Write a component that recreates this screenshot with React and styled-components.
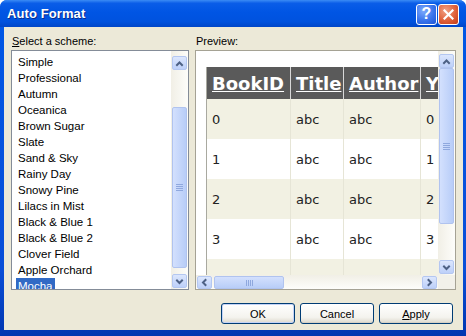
import React from "react";
import styled, { createGlobalStyle } from "styled-components";

const schemes = [
  "Simple",
  "Professional",
  "Autumn",
  "Oceanica",
  "Brown Sugar",
  "Slate",
  "Sand & Sky",
  "Rainy Day",
  "Snowy Pine",
  "Lilacs in Mist",
  "Black & Blue 1",
  "Black & Blue 2",
  "Clover Field",
  "Apple Orchard",
  "Mocha",
];

const columns = [
  { name: "BookID", width: 84 },
  { name: "Title", width: 53 },
  { name: "Author", width: 77 },
  { name: "Year", width: 60 },
];

const GlobalStyle = createGlobalStyle`
  html, body {
    margin: 0;
    padding: 0;
    background: #ffffff;
  }
  body {
    font-family: "Liberation Sans", Arial, sans-serif;
  }
`;

const Window = styled.div`
  width: 466px;
  height: 336px;
  display: flex;
  flex-direction: column;
  background: linear-gradient(to bottom, #0058e6, #0a4fd8 80%, #0036b0);
  border-radius: 7px 7px 0 0;
  overflow: hidden;
`;

const TitleBar = styled.div`
  height: 27px;
  flex: none;
  display: flex;
  align-items: center;
  justify-content: space-between;
  padding: 0 7px 0 7px;
  background: linear-gradient(
    to bottom,
    #3b8cf5 0%,
    #0a5de8 12%,
    #0055e4 45%,
    #0052de 80%,
    #0046c8 100%
  );
`;

const Title = styled.div`
  color: #ffffff;
  font: bold 13px "Liberation Sans", Arial, sans-serif;
  text-shadow: 1px 1px 0 #0b2d8c;
  letter-spacing: 0.1px;
`;

const Caption = styled.div`
  display: flex;
  gap: 1px;
  margin-top: 1px;
`;

const CapButton = styled.div`
  width: 21px;
  height: 21px;
  box-sizing: border-box;
  border: 1px solid #ffffff;
  border-radius: 3px;
  display: flex;
  align-items: center;
  justify-content: center;
  color: #ffffff;
  font: bold 16px "Liberation Sans", Arial, sans-serif;
  background: ${(p) =>
    p.$close
      ? "radial-gradient(circle at 35% 30%, #f0a184, #e0613a 55%, #c23a17)"
      : "radial-gradient(circle at 35% 30%, #7eaafc, #3a74ec 55%, #1d55d6)"};
`;

const Client = styled.div`
  flex: 1;
  margin: 0 3px 6px 4px;
  background: #ece9d8;
  padding: 7px 7px 6px 7px;
  display: flex;
  flex-direction: column;
`;

const Panes = styled.div`
  display: grid;
  grid-template-columns: 178px 261px;
  column-gap: 6px;
`;

const Pane = styled.div`
  display: flex;
  flex-direction: column;
`;

const Label = styled.div`
  height: 16px;
  line-height: 15px;
  font-size: 11px;
  color: #000000;
  padding-left: 1px;
  u {
    text-decoration: underline;
  }
`;

const ListBox = styled.div`
  height: 240px;
  box-sizing: border-box;
  border: 1px solid #848c98;
  background: #ffffff;
  display: flex;
  overflow: hidden;
`;

const Items = styled.div`
  flex: 1;
  padding: 3px 0 0 4px;
`;

const Item = styled.div`
  width: fit-content;
  height: 16px;
  line-height: 16px;
  padding: 0 2px;
  font-size: 11.5px;
  color: ${(p) => (p.$selected ? "#ffffff" : "#000000")};
  background: ${(p) => (p.$selected ? "#316ac5" : "transparent")};
  white-space: nowrap;
`;

const VScroll = styled.div`
  width: 17px;
  min-height: 0;
  box-sizing: border-box;
  display: flex;
  flex-direction: column;
  padding: ${(p) => p.$pad};
  background: linear-gradient(to right, #f1efe6, #fdfdfa);
`;

const HScroll = styled.div`
  display: flex;
  padding: 0 1px;
  background: linear-gradient(to bottom, #f1efe6, #fdfdfa);
`;

const ArrowBtn = styled.div`
  flex: none;
  width: 15px;
  height: ${(p) => (p.$h ? "13px" : "14px")};
  box-sizing: border-box;
  border: 1px solid #b4c7f1;
  border-radius: 2px;
  background: linear-gradient(to bottom, #dbe6fd, #bdd0f9);
  display: flex;
  align-items: center;
  justify-content: center;
  margin-top: ${(p) => (p.$h ? "1px" : "0")};
`;

const Track = styled.div`
  flex: 1;
  min-height: 0;
  display: flex;
  flex-direction: ${(p) => (p.$h ? "row" : "column")};
  padding-${(p) => (p.$h ? "left" : "top")}: ${(p) => p.$offset}px;
`;

const Thumb = styled.div`
  flex: none;
  ${(p) =>
    p.$h
      ? `width: ${p.$size}px; height: 13px; margin-top: 1px;`
      : `height: ${p.$size}px; width: 15px;`}
  box-sizing: border-box;
  border: 1px solid #b0c3ef;
  border-radius: 2px;
  background: ${(p) =>
    p.$h
      ? "linear-gradient(to bottom, #d3e0fd, #b8cdf8)"
      : "linear-gradient(to right, #d3e0fd, #b8cdf8)"};
  display: flex;
  flex-direction: ${(p) => (p.$h ? "row" : "column")};
  align-items: center;
  justify-content: center;
  gap: 1px;
`;

const Grip = styled.span`
  display: block;
  background: #8fa8de;
  ${(p) => (p.$h ? "width: 1px; height: 6px;" : "height: 1px; width: 7px;")}
`;

const PreviewBox = styled.div`
  height: 240px;
  box-sizing: border-box;
  border: 1px solid #a5a294;
  display: grid;
  grid-template-columns: minmax(0, 1fr) 17px;
  grid-template-rows: minmax(0, 1fr) 14px;
  overflow: hidden;
`;

const Viewport = styled.div`
  min-height: 0;
  min-width: 0;
  background: #ffffff;
  overflow: hidden;
  padding: 16px 0 0 10px;
`;

const Corner = styled.div`
  background: #f2f1ea;
`;

const Table = styled.table`
  border-collapse: collapse;
  table-layout: fixed;
  width: 274px;
  border-left: 1px solid #a9a9a0;
  font-family: "DejaVu Sans", Verdana, sans-serif;
`;

const HeadCell = styled.th`
  height: 32px;
  padding: 0 0 0 5px;
  text-align: left;
  background: #5a5a5a;
  color: #ffffff;
  font-size: 18px;
  font-weight: bold;
  text-decoration: underline;
  white-space: nowrap;
  overflow: hidden;
  border-right: 1px solid #d8d8d8;
`;

const Cell = styled.td`
  height: 40px;
  padding: 0 0 0 5px;
  font-size: 13px;
  color: #222222;
  background: ${(p) => (p.$alt ? "#f2f1e3" : "#ffffff")};
  border-right: 1px solid #e6e5d6;
  white-space: nowrap;
`;

const Buttons = styled.div`
  margin-top: 13px;
  margin-right: 3px;
  display: flex;
  justify-content: flex-end;
  gap: 5px;
`;

const Button = styled.button`
  width: 74px;
  height: 21px;
  padding: 0;
  border: 1px solid #003c74;
  border-radius: 3px;
  font: 11px "Liberation Sans", Arial, sans-serif;
  color: #000000;
  background: linear-gradient(to bottom, #ffffff, #f4f3ee 70%, #dcd8cc);
  box-shadow: ${(p) =>
    p.$default ? "inset 0 0 0 1px #c4d3f6" : "inset 0 -1px 0 #d6d0c5"};
  u {
    text-decoration: underline;
  }
`;

const Chevron = ({ dir }) => {
  const paths = {
    up: "M2 6 L4.5 3.5 L7 6",
    down: "M2 3.5 L4.5 6 L7 3.5",
    left: "M5.5 2 L3 4.5 L5.5 7",
    right: "M3.5 2 L6 4.5 L3.5 7",
  };
  return (
    <svg width="9" height="9" viewBox="0 0 9 9">
      <path
        d={paths[dir]}
        fill="none"
        stroke="#4d6185"
        strokeWidth="2"
        strokeLinecap="square"
      />
    </svg>
  );
};

function Scrollbar({ pad, offset, size, after }) {
  return (
    <VScroll $pad={pad}>
      <ArrowBtn>
        <Chevron dir="up" />
      </ArrowBtn>
      <Track $offset={offset}>
        <Thumb $size={size}>
          <Grip />
          <Grip />
          <Grip />
          <Grip />
        </Thumb>
      </Track>
      <ArrowBtn style={{ marginBottom: after }}>
        <Chevron dir="down" />
      </ArrowBtn>
    </VScroll>
  );
}

export default function App() {
  return (
    <>
      <GlobalStyle />
      <Window>
        <TitleBar>
          <Title>Auto Format</Title>
          <Caption>
            <CapButton>?</CapButton>
            <CapButton $close>
              <svg width="11" height="11" viewBox="0 0 11 11">
                <path
                  d="M1.5 1.5 L9.5 9.5 M9.5 1.5 L1.5 9.5"
                  stroke="#ffffff"
                  strokeWidth="2.2"
                  strokeLinecap="square"
                />
              </svg>
            </CapButton>
          </Caption>
        </TitleBar>
        <Client>
          <Panes>
            <Pane>
              <Label>
                <u>S</u>elect a scheme:
              </Label>
              <ListBox>
                <Items>
                  {schemes.map((s) => (
                    <Item key={s} $selected={s === "Mocha"}>
                      {s}
                    </Item>
                  ))}
                </Items>
                <Scrollbar pad="5px 1px 0 1px" offset={37} size={161} after="1px" />
              </ListBox>
            </Pane>
            <Pane>
              <Label>Preview:</Label>
              <PreviewBox>
                <Viewport>
                  <Table>
                    <colgroup>
                      {columns.map((c) => (
                        <col key={c.name} style={{ width: c.width }} />
                      ))}
                    </colgroup>
                    <thead>
                      <tr>
                        {columns.map((c) => (
                          <HeadCell key={c.name}>{c.name}</HeadCell>
                        ))}
                      </tr>
                    </thead>
                    <tbody>
                      {[0, 1, 2, 3].map((i) => (
                        <tr key={i}>
                          <Cell $alt={i % 2 === 0}>{i}</Cell>
                          <Cell $alt={i % 2 === 0}>abc</Cell>
                          <Cell $alt={i % 2 === 0}>abc</Cell>
                          <Cell $alt={i % 2 === 0}>{i}</Cell>
                        </tr>
                      ))}
                      <tr>
                        {columns.map((c) => (
                          <Cell key={c.name} $alt />
                        ))}
                      </tr>
                    </tbody>
                  </Table>
                </Viewport>
                <Scrollbar pad="3px 1px 0 1px" offset={0} size={156} after="1px" />
                <HScroll>
                  <ArrowBtn $h>
                    <Chevron dir="left" />
                  </ArrowBtn>
                  <Track $h $offset={2}>
                    <Thumb $h $size={70}>
                      <Grip $h />
                      <Grip $h />
                      <Grip $h />
                      <Grip $h />
                    </Thumb>
                  </Track>
                  <ArrowBtn $h>
                    <Chevron dir="right" />
                  </ArrowBtn>
                </HScroll>
                <Corner />
              </PreviewBox>
            </Pane>
          </Panes>
          <Buttons>
            <Button $default>OK</Button>
            <Button>Cancel</Button>
            <Button>
              <u>A</u>pply
            </Button>
          </Buttons>
        </Client>
      </Window>
    </>
  );
}
